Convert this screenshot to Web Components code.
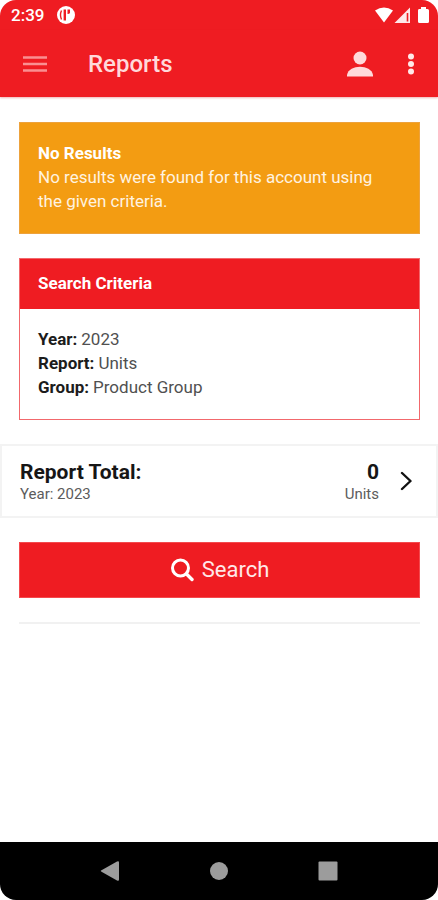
<!DOCTYPE html>
<html lang="en">
<head>
<meta charset="utf-8">
<meta name="viewport" content="width=device-width, initial-scale=1">
<title>Reports</title>
<style>
  :root {
    --red: #ef1c22;
    --amber: #f39c12;
    --edge: 19px;
    --gap: 24px;
  }
  html { background: #fff; }
  body {
    margin: 0;
    font: 400 17px/24px Roboto, sans-serif;
    color: #222;
  }
</style>
</head>
<body>
<report-screen>
  <status-bar slot="top" time="2:39"></status-bar>
  <app-bar slot="top" heading="Reports"></app-bar>
  <notice-box heading="No Results">No results were found for this account using the given criteria.</notice-box>
  <criteria-card heading="Search Criteria">
    <criteria-item label="Year:">2023</criteria-item>
    <criteria-item label="Report:">Units</criteria-item>
    <criteria-item label="Group:">Product Group</criteria-item>
  </criteria-card>
  <total-row>
    <span slot="title">Report Total:</span>
    <span slot="detail">Year: 2023</span>
    <span slot="value">0</span>
    <span slot="unit">Units</span>
  </total-row>
  <search-button>Search</search-button>
  <section-rule></section-rule>
  <system-nav slot="bottom"></system-nav>
</report-screen>

<script>
const define = (name, markup, setup) => {
  customElements.define(name, class extends HTMLElement {
    constructor() {
      super();
      this.attachShadow({ mode: "open" }).innerHTML = markup;
    }
    connectedCallback() {
      if (setup) setup(this, this.shadowRoot);
    }
  });
};

const fill = (attr) => (host, root) => {
  root.querySelector("[data-text]").textContent = host.getAttribute(attr);
};

define("report-screen", `
  <style>
    :host { display: flex; flex-direction: column; min-height: 100vh; }
    main { flex: 1; display: flex; flex-direction: column; gap: var(--gap); padding: 25px 0; }
    ::slotted(notice-box), ::slotted(criteria-card), ::slotted(search-button), ::slotted(section-rule) {
      margin: 0 18px 0 var(--edge);
    }
  </style>
  <header><slot name="top"></slot></header>
  <main><slot></slot></main>
  <slot name="bottom"></slot>`);

define("status-bar", `
  <style>
    :host {
      display: flex; align-items: center; height: 30px; padding: 0 8px 0 11px;
      background: var(--red); color: #fff; font-size: 17px; font-weight: 500;
      border-radius: 16px 16px 0 0;
    }
    .badge { margin-left: 13px; }
    .signals { margin-left: auto; }
    svg { display: block; }
  </style>
  <span data-text></span>
  <svg class="badge" width="18" height="18" viewBox="0 0 18 18" aria-hidden="true">
    <circle cx="9" cy="9" r="9" fill="#fff"/>
    <path d="M4.500 4.500Q2.500 9 4.500 13.500" fill="none" stroke="#ef1c22" stroke-width="1.400"/>
    <path d="M7.800 3.500v11" fill="none" stroke="#ef1c22" stroke-width="2.400"/>
    <path d="M10.500 3.500h2.500v3q0 1.500-2.500 1.500Z" fill="#ef1c22"/>
  </svg>
  <svg class="signals" width="56" height="18" viewBox="0 0 56 18" aria-hidden="true">
    <path d="M1 4.500Q10 -1.500 19 4.500L10 16.500Z" fill="#fff"/>
    <path d="M36 1.500V17H20.500Z" fill="#fff" fill-opacity=".9"/>
    <path d="M33.500 7v8.500" stroke="#ef1c22" stroke-width="1.600"/>
    <path d="M45 3h2V1h5v2h1.500q1.500 0 1.500 1.500v11q0 1.500-1.500 1.500h-8q-1.500 0-1.500-1.500v-11Q44 3 45 3Z" fill="#fff"/>
  </svg>`, fill("time"));

define("app-bar", `
  <style>
    :host {
      display: flex; align-items: center; height: 67px; padding: 0 12px 0 17px; box-sizing: border-box;
      background: var(--red); color: #ffd9da; box-shadow: 0 1px 2px rgba(200, 0, 0, .3);
    }
    button { display: grid; place-items: center; padding: 0; border: 0; background: none; color: inherit; height: 40px; }
    .menu { width: 36px; color: #fa8f91; }
    h1 { flex: 1; margin: 0 0 0 35px; font-size: 24px; line-height: 32px; font-weight: 500; }
    .person { width: 36px; }
    .more { width: 30px; margin-left: 18px; color: #ffe9e9; }
    svg { display: block; }
  </style>
  <button class="menu" aria-label="Menu">
    <svg width="24" height="18" viewBox="0 0 24 18" stroke="currentColor" stroke-width="2.400"><path d="M0 2.500h24M0 9h24M0 15.500h24"/></svg>
  </button>
  <h1 data-text></h1>
  <button class="person" aria-label="Account">
    <svg width="26" height="26" viewBox="0 0 26 26" fill="currentColor"><circle cx="13" cy="7" r="6.500"/><path d="M0 25.500v-1.500C1 18.500 7 15.800 13 15.800S25 18.500 26 24v1.500Z"/></svg>
  </button>
  <button class="more" aria-label="More options">
    <svg width="8" height="22" viewBox="0 0 8 22" fill="currentColor"><circle cx="4" cy="3.500" r="3"/><circle cx="4" cy="11" r="3"/><circle cx="4" cy="18.500" r="3"/></svg>
  </button>`, fill("heading"));

define("notice-box", `
  <style>
    :host { display: block; padding: 18px 24px 20px 18px; border: 1px solid #eda23c; background: var(--amber); color: #fff3e0; }
    strong { display: block; color: #fff; font-weight: 700; }
    p { margin: 0; }
  </style>
  <strong data-text></strong>
  <p><slot></slot></p>`, fill("heading"));

define("criteria-card", `
  <style>
    :host { display: block; border: 1px solid #f2686c; }
    h2 { margin: 0; padding: 12px 18px 14px; background: var(--red); color: #fff; font-size: 17px; line-height: 24px; font-weight: 700; }
    dl { margin: 0; padding: 18px 18px 20px; }
  </style>
  <h2 data-text></h2>
  <dl><slot></slot></dl>`, fill("heading"));

define("criteria-item", `
  <style>
    :host { display: flex; gap: 4px; }
    dt { font-weight: 700; color: #1c1c1c; }
    dd { margin: 0; color: #505050; }
  </style>
  <dt data-text></dt><dd><slot></slot></dd>`, fill("label"));

define("total-row", `
  <style>
    :host { display: block; }
    a {
      display: flex; align-items: center; padding: 13px 24px 13px 18px;
      border: 2px solid #f3f3f3; color: #161616; text-decoration: none;
    }
    .side { display: flex; flex-direction: column; }
    .end { margin-left: auto; text-align: right; }
    .big { font-size: 21px; line-height: 26px; font-weight: 700; }
    .small { font-size: 15px; line-height: 18px; color: #5c5c5c; }
    svg { display: block; margin-left: 21px; }
  </style>
  <a href="#details">
    <span class="side"><span class="big"><slot name="title"></slot></span><span class="small"><slot name="detail"></slot></span></span>
    <span class="side end"><span class="big"><slot name="value"></slot></span><span class="small"><slot name="unit"></slot></span></span>
    <svg width="12" height="20" viewBox="0 0 12 20" fill="none" stroke="#111" stroke-width="2.400" stroke-linecap="round" stroke-linejoin="round" aria-hidden="true"><path d="M2 2l8.500 8L2 18"/></svg>
  </a>`);

define("search-button", `
  <style>
    :host { display: block; }
    button {
      display: flex; justify-content: center; align-items: center; gap: 8px;
      width: 100%; height: 56px; padding: 0; border: 1px solid #f4494d;
      background: var(--red); color: #ffe8e8; font: 400 22px/28px Roboto, sans-serif;
    }
    svg { display: block; }
  </style>
  <button>
    <svg width="24" height="24" viewBox="0 0 24 24" fill="none" stroke="#fff" aria-hidden="true"><circle cx="10.500" cy="10" r="8" stroke-width="3"/><path d="M16.500 16l5.500 5.500" stroke-width="3.400" stroke-linecap="round"/></svg>
    <span><slot></slot></span>
  </button>`);

define("section-rule", `
  <style>
    :host { display: block; }
    hr { margin: 0; border: 0; border-top: 2px solid #f1f1f1; }
  </style>
  <hr>`);

define("system-nav", `
  <style>
    :host {
      display: flex; justify-content: center; gap: 73px; height: 58px;
      background: #000; border-radius: 0 0 16px 16px;
    }
    button { display: grid; place-items: center; width: 36px; padding: 0; border: 0; background: none; }
    svg { display: block; }
  </style>
  <button aria-label="Back"><svg width="20" height="20" viewBox="0 0 20 20" fill="#9c9c9c"><path d="M1.500 9.300 17 .6q2-1 2 1v16.800q0 2-2 1L1.500 10.700q-1.500-.7 0-1.400Z"/></svg></button>
  <button aria-label="Home"><svg width="20" height="20" viewBox="0 0 20 20" fill="#9c9c9c"><circle cx="10" cy="10" r="9"/></svg></button>
  <button aria-label="Recent apps"><svg width="20" height="20" viewBox="0 0 20 20" fill="#9c9c9c"><rect x=".5" y=".5" width="19" height="19" rx="1"/></svg></button>`);
</script>
</body>
</html>
